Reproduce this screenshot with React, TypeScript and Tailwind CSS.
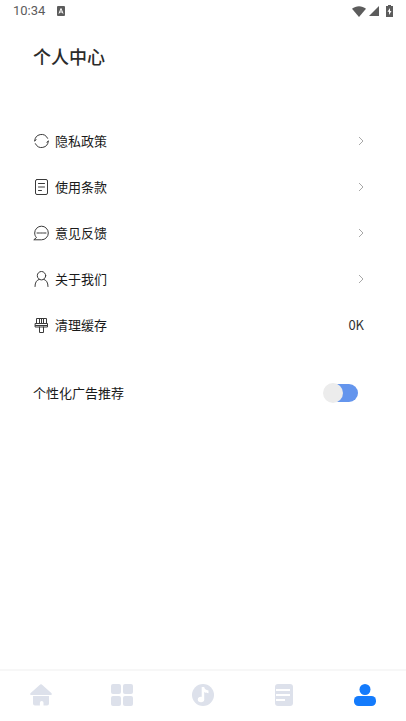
import { useState, type ReactNode } from "react";

interface MenuItem {
  label: string;
  icon: ReactNode;
  value?: string;
}

const lineIcon = {
  width: 16,
  height: 16,
  viewBox: "0 0 16 16",
  fill: "none",
  stroke: "#3a3a3a",
  strokeWidth: 1,
  strokeLinecap: "round" as const,
  strokeLinejoin: "round" as const,
};

const MENU: MenuItem[] = [
  {
    label: "隐私政策",
    icon: (
      <svg {...lineIcon}>
        <path d="M1.700 7.800A6.800 6.800 0 0 1 14.600 5.300M1.700 7.800l1.400-1" />
        <path d="M15.300 8.200A6.800 6.800 0 0 1 2.400 10.700M15.300 8.200l-1.400 1" />
      </svg>
    ),
  },
  {
    label: "使用条款",
    icon: (
      <svg {...lineIcon}>
        <rect x="2.5" y="0.5" width="12" height="15" rx="1.5" />
        <path d="M5.5 4.5h6M5.5 8h6M5.5 11.5h3" />
      </svg>
    ),
  },
  {
    label: "意见反馈",
    icon: (
      <svg {...lineIcon}>
        <path d="M1.200 14.800h7.300A6.800 6.800 0 1 0 1.700 8c0 1.700.5 3.200 1.500 4.300Z" />
        <path d="M4 8h2.500M7.500 8h2M10.500 8H13" />
      </svg>
    ),
  },
  {
    label: "关于我们",
    icon: (
      <svg {...lineIcon}>
        <circle cx="8.5" cy="4.700" r="4.200" />
        <path d="M2 15.500c0-4 1.500-6.400 4.300-7.200M15 15.500c0-4-1.500-6.400-4.300-7.200" />
      </svg>
    ),
  },
  {
    label: "清理缓存",
    value: "0K",
    icon: (
      <svg {...lineIcon}>
        <path d="M3.500 6.500v-5h10v5M6.500 2v4M8.500 2v4M10.500 2v4" />
        <path d="M2.500 6.500h12V10h-12ZM2.500 8.500h12" />
        <path d="M6.500 10v5.500h4V10" />
      </svg>
    ),
  },
];

const TABS = [
  {
    name: "首页",
    icon: (
      <>
        <path d="M10.200.6a1.200 1.200 0 0 1 1.600 0l9.500 8.400c.9.800.5 2-.6 2H1.300C.2 11-.2 9.800.7 9Z" />
        <path d="M3 12h16v7.500a2 2 0 0 1-2 2h-3.500v-2.800a1.800 1.800 0 0 0-3.600 0v2.800H5a2 2 0 0 1-2-2Z" />
      </>
    ),
  },
  {
    name: "分类",
    icon: (
      <>
        <rect width="10" height="10" rx="2" />
        <rect x="12" width="10" height="10" rx="2" />
        <rect y="12" width="10" height="10" rx="2" />
        <rect x="12" y="12" width="10" height="10" rx="2" />
      </>
    ),
  },
  {
    name: "音乐",
    icon: (
      <>
        <circle cx="11" cy="11" r="11" />
        <ellipse cx="9" cy="15.500" rx="3.200" ry="2.800" fill="#fff" />
        <path d="M9.700 3h2.500c.2 2 1.600 3 4.300 3.400v2.800c-1.800 0-3.200-.4-4.300-1.200v7.500H9.700Z" fill="#fff" />
      </>
    ),
  },
  {
    name: "文章",
    icon: (
      <>
        <rect x="2" width="18" height="22" rx="3" />
        <path d="M3 6h14M3 11h14M3 16h9" stroke="#fff" strokeWidth="2" />
      </>
    ),
  },
  {
    name: "我的",
    icon: (
      <>
        <circle cx="11" cy="5.5" r="5.5" />
        <rect y="12" width="22" height="10" rx="4.500" />
      </>
    ),
  },
];

function StatusBar() {
  return (
    <div className="flex h-[22px] items-center justify-between px-[13px] text-[#5c5c5c]">
      <div className="flex items-center gap-3">
        <span className="font-[Roboto,sans-serif] text-[13px] leading-4">10:34</span>
        <svg width="8" height="10" viewBox="0 0 8 10">
          <rect width="8" height="10" rx="1" fill="currentColor" />
          <path d="M2 7.500 4 2.500l2 5M2.800 6h2.400" fill="none" stroke="#fff" />
        </svg>
      </div>
      <div className="flex items-center gap-[3px]">
        <svg width="14" height="11" viewBox="0 0 14 11" fill="currentColor">
          <path d="M0 2.800C4-.6 10-.6 14 2.800L7 11Z" />
        </svg>
        <svg width="10" height="10" viewBox="0 0 10 10" fill="currentColor">
          <path d="M10 0v10H0Z" />
        </svg>
        <svg className="ml-1" width="7" height="12" viewBox="0 0 7 12">
          <path d="M2 0h3v1h2v11H0V1h2Z" fill="currentColor" />
          <path d="M4 3 1.500 6.800H3V10l2.500-4H4Z" fill="#fff" />
        </svg>
      </div>
    </div>
  );
}

function MenuRow({ item }: { item: MenuItem }) {
  return (
    <li>
      <button type="button" className="flex h-[46px] w-full items-center gap-[6px] text-left">
        {item.icon}
        <span className="flex-1">{item.label}</span>
        {item.value ? (
          <span className="text-[#333]">{item.value}</span>
        ) : (
          <svg width="6" height="10" viewBox="0 0 6 10" fill="none" stroke="#a8a8a8">
            <path d="m1 1 4 4-4 4" />
          </svg>
        )}
      </button>
    </li>
  );
}

export default function App() {
  const [personalized, setPersonalized] = useState(false);
  const [active, setActive] = useState("我的");

  return (
    <div className="flex min-h-screen flex-col bg-white font-['Noto_Sans_CJK_SC',sans-serif] text-[13px] leading-5 text-[#1a1a1a]">
      <StatusBar />

      <main className="flex-1 pr-[42px] pl-[33px]">
        <h1 className="pt-5 text-[18px] leading-7 font-medium text-[#2b2b2b]">个人中心</h1>

        <ul className="mt-12">
          {MENU.map((item) => (
            <MenuRow key={item.label} item={item} />
          ))}
        </ul>

        <div className="mt-[22px] flex h-[46px] items-center justify-between pr-[6px]">
          <label htmlFor="personalized">个性化广告推荐</label>
          <span className="relative flex h-[18px] w-[34px] items-center">
            <input
              id="personalized"
              type="checkbox"
              role="switch"
              checked={personalized}
              onChange={(e) => setPersonalized(e.target.checked)}
              className="peer h-full w-full cursor-pointer appearance-none rounded-full bg-[#6495ed]"
            />
            <span className="pointer-events-none absolute -left-px size-5 rounded-full bg-[#ececec] peer-checked:left-[15px]" />
          </span>
        </div>
      </main>

      <nav className="flex h-[52px] border-t-2 border-[#f7f7f7] pb-0.5">
        {TABS.map((tab) => (
          <button
            key={tab.name}
            type="button"
            aria-label={tab.name}
            onClick={() => setActive(tab.name)}
            className={`flex flex-1 items-center justify-center ${
              active === tab.name ? "text-[#147bfc]" : "text-[#dde1eb]"
            }`}
          >
            <svg width="22" height="22" viewBox="0 0 22 22" fill="currentColor">
              {tab.icon}
            </svg>
          </button>
        ))}
      </nav>
    </div>
  );
}
